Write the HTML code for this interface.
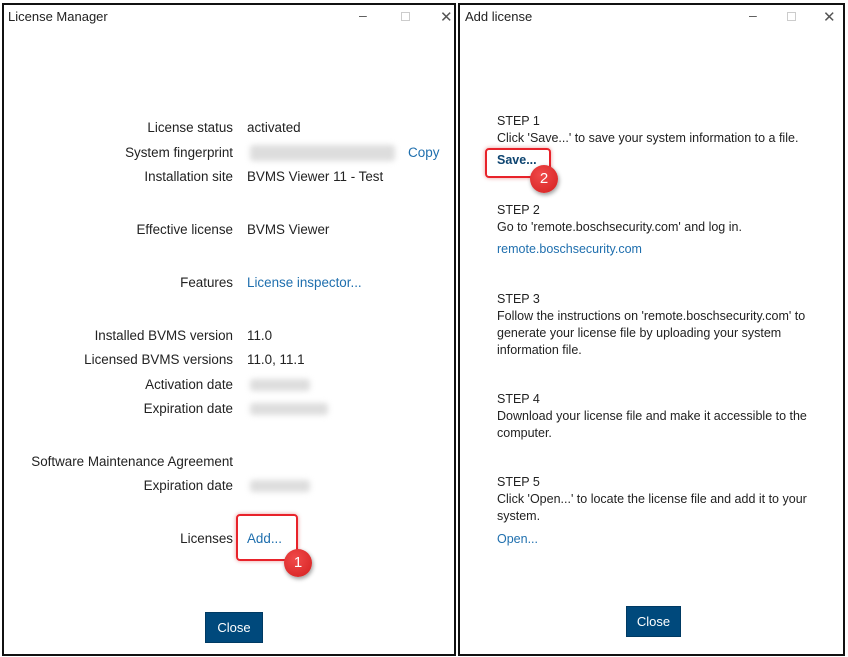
<!DOCTYPE html>
<html><head><meta charset="utf-8"><style>
*{margin:0;padding:0;box-sizing:border-box}
body{width:848px;height:657px;background:#fff;position:relative;font-family:"Liberation Sans",sans-serif;font-size:12.5px;color:#222;overflow:hidden}
.win{position:absolute;border:2px solid #111;background:#fff}
.t{position:absolute;white-space:nowrap;line-height:16px}
.L{font-size:13.4px}
.r{text-align:right}
.lnk{color:#1f6fae}
.blur{position:absolute;background:#ddd;filter:blur(3px);border-radius:3px}
.btn{position:absolute;background:#00497c;color:#fff;border:1px solid #003a63;text-align:center;font-size:13px}
.callout{position:absolute;border:2px solid #e8222a;border-radius:4px;box-shadow:0 0 4px rgba(200,0,0,.4)}
.num{position:absolute;width:28px;height:28px;border-radius:50%;background:radial-gradient(circle at 40% 35%,#f04a4a,#d41f1f);color:#fff;text-align:center;line-height:28px;font-size:15px;box-shadow:1px 2px 4px rgba(0,0,0,.4)}
.ctl{position:absolute;color:#555;font-size:14px}
</style></head><body>
<div class="win" style="left:2px;top:3px;width:454px;height:653px"></div>
<div class="win" style="left:458px;top:3px;width:387px;height:653px"></div>

<div class="t" style="left:8px;top:9px;font-size:13px">License Manager</div>
<div class="ctl" style="left:359px;top:7px">–</div>
<div style="position:absolute;left:401px;top:12px;width:9px;height:9px;border:1px solid #ccc"></div>
<div class="ctl" style="left:440px;top:8px;font-size:15px">✕</div>

<div class="t L r" style="right:615px;top:120px">License status</div>
<div class="t L" style="left:247px;top:120px">activated</div>
<div class="t L r" style="right:615px;top:145px">System fingerprint</div>
<div class="blur" style="left:250px;top:145px;width:145px;height:16px"></div>
<div class="t lnk" style="left:408px;top:145px;font-size:13.5px">Copy</div>
<div class="t L r" style="right:615px;top:169px">Installation site</div>
<div class="t L" style="left:247px;top:169px">BVMS Viewer 11 - Test</div>
<div class="t L r" style="right:615px;top:222px">Effective license</div>
<div class="t L" style="left:247px;top:222px">BVMS Viewer</div>
<div class="t L r" style="right:615px;top:275px">Features</div>
<div class="t L lnk" style="left:247px;top:275px">License inspector...</div>
<div class="t L r" style="right:615px;top:328px">Installed BVMS version</div>
<div class="t L" style="left:247px;top:328px">11.0</div>
<div class="t L r" style="right:615px;top:352px">Licensed BVMS versions</div>
<div class="t L" style="left:247px;top:352px">11.0, 11.1</div>
<div class="t L r" style="right:615px;top:377px">Activation date</div>
<div class="blur" style="left:250px;top:379px;width:60px;height:12px"></div>
<div class="t L r" style="right:615px;top:401px">Expiration date</div>
<div class="blur" style="left:250px;top:403px;width:78px;height:12px"></div>
<div class="t L r" style="right:615px;top:454px">Software Maintenance Agreement</div>
<div class="t L r" style="right:615px;top:478px">Expiration date</div>
<div class="blur" style="left:250px;top:480px;width:60px;height:12px"></div>
<div class="t L r" style="right:615px;top:531px">Licenses</div>
<div class="t L lnk" style="left:247px;top:531px">Add...</div>
<div class="callout" style="left:236px;top:514px;width:62px;height:47px"></div>
<div class="num" style="left:284px;top:549px">1</div>
<div class="btn" style="left:205px;top:612px;width:58px;height:31px;line-height:30px">Close</div>

<div class="t" style="left:465px;top:9px;font-size:13px">Add license</div>
<div class="ctl" style="left:749px;top:7px">–</div>
<div style="position:absolute;left:787px;top:12px;width:9px;height:9px;border:1px solid #ccc"></div>
<div class="ctl" style="left:823px;top:8px;font-size:15px">✕</div>

<div style="position:absolute;left:497px;top:113px;line-height:17px;white-space:nowrap">
STEP 1<br>Click 'Save...' to save your system information to a file.
</div>
<div class="t" style="left:497px;top:152px;font-weight:bold;color:#0d4470">Save...</div>
<div class="callout" style="left:485px;top:148px;width:66px;height:30px"></div>
<div class="num" style="left:530px;top:165px">2</div>

<div style="position:absolute;left:497px;top:202px;line-height:17px;white-space:nowrap">
STEP 2<br>Go to 'remote.boschsecurity.com' and log in.
</div>
<div class="t lnk" style="left:497px;top:241px">remote.boschsecurity.com</div>
<div style="position:absolute;left:497px;top:291px;line-height:17px;white-space:nowrap">
STEP 3<br>Follow the instructions on 'remote.boschsecurity.com' to<br>generate your license file by uploading your system<br>information file.
</div>
<div style="position:absolute;left:497px;top:391px;line-height:17px;white-space:nowrap">
STEP 4<br>Download your license file and make it accessible to the<br>computer.
</div>
<div style="position:absolute;left:497px;top:474px;line-height:17px;white-space:nowrap">
STEP 5<br>Click 'Open...' to locate the license file and add it to your<br>system.
</div>
<div class="t lnk" style="left:497px;top:531px">Open...</div>
<div class="btn" style="left:626px;top:606px;width:55px;height:31px;line-height:30px">Close</div>
</body></html>
